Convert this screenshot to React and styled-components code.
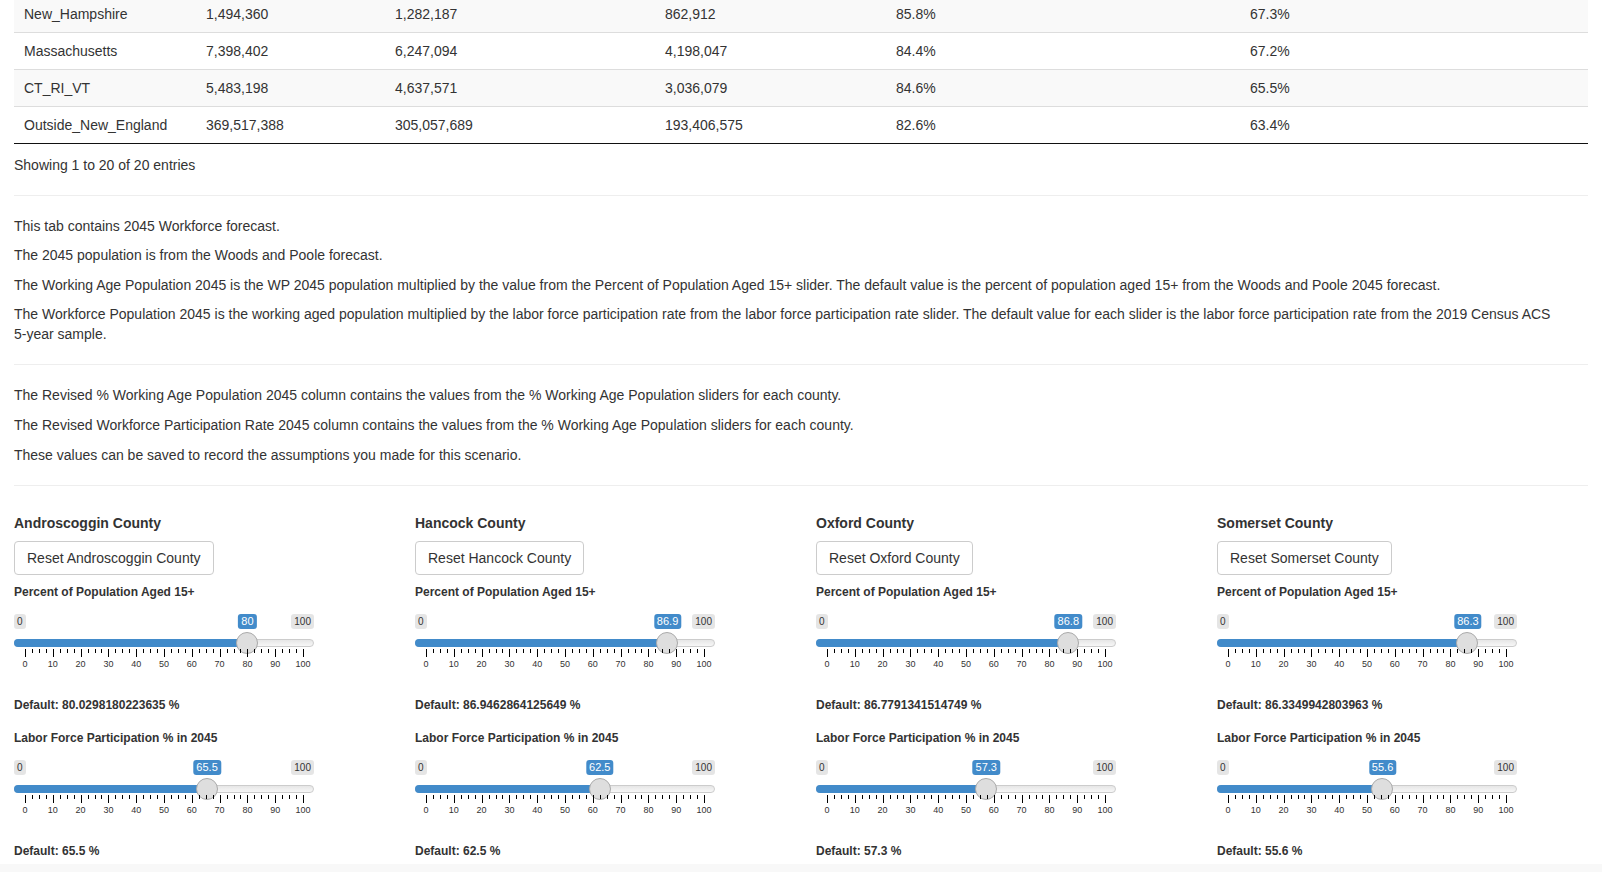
import styled, { createGlobalStyle } from "styled-components";

const GlobalStyle = createGlobalStyle`
  html, body {
    margin: 0;
    overflow: hidden;
    background: #fff;
  }
  body {
    font-family: "Liberation Sans", Arial, sans-serif;
    font-size: 14px;
    line-height: 20px;
    color: #333;
  }
`;

const Page = styled.div({
  padding: "0 14px",
});

const Table = styled.table({
  width: "100%",
  tableLayout: "fixed",
  borderCollapse: "collapse",
  marginTop: "-4px",
  borderBottom: "1px solid #111",
});

const Row = styled.tr`
  background: ${(p) => (p.$odd ? "#f9f9f9" : "#fff")};
`;

const Cell = styled.td`
  padding: 8px 10px;
  line-height: 20px;
  white-space: nowrap;
  border-top: ${(p) => (p.$first ? "none" : "1px solid #ddd")};
`;

const Info = styled.div({
  paddingTop: "10.6px",
  lineHeight: "20px",
});

const Rule = styled.hr({
  margin: "20px 0",
  border: 0,
  borderTop: "1px solid #eee",
});

const Para = styled.p({
  margin: "0 0 9.6px",
});

const NoWrap = styled.span({
  whiteSpace: "nowrap",
});

const CountyGrid = styled.div({
  display: "grid",
  gridTemplateColumns: "repeat(4, 1fr)",
  columnGap: "30px",
});

const CountyColumn = styled.div({
  display: "flex",
  flexDirection: "column",
  alignItems: "flex-start",
});

const CountyName = styled.h5({
  margin: "10px 0 0",
  fontSize: "14px",
  lineHeight: "15.4px",
  fontWeight: 700,
});

const ResetButton = styled.button({
  marginTop: "10px",
  padding: "6px 12px",
  fontFamily: "inherit",
  fontSize: "14px",
  lineHeight: "20px",
  color: "#333",
  background: "#fff",
  border: "1px solid #ccc",
  borderRadius: "4px",
});

const SliderLabel = styled.div`
  margin-top: ${(p) => p.$top}px;
  font-size: 12px;
  line-height: 17px;
  font-weight: 700;
`;

const DefaultText = styled.div({
  marginTop: "27px",
  fontSize: "12px",
  lineHeight: "17px",
  fontWeight: 700,
});

const SliderWrap = styled.div({
  width: "300px",
  marginTop: "13px",
});

const EdgeRow = styled.div({
  position: "relative",
  display: "flex",
  justifyContent: "space-between",
  height: "15px",
});

const EdgeLabel = styled.span({
  fontSize: "10px",
  lineHeight: "13px",
  padding: "1px 3px",
  background: "rgba(0,0,0,0.1)",
  borderRadius: "3px",
  color: "#333",
});

const ValueBubble = styled.span({
  position: "absolute",
  top: 0,
  transform: "translateX(-50%)",
  fontSize: "11px",
  lineHeight: "13px",
  padding: "1px 3px",
  background: "#428bca",
  color: "#fff",
  borderRadius: "3px",
});

const Track = styled.div({
  position: "relative",
  marginTop: "10px",
  height: "8px",
  boxSizing: "border-box",
  border: "1px solid #ccc",
  borderRadius: "16px",
  background: "linear-gradient(to bottom, #dedede -50%, #fff 150%)",
});

const Fill = styled.div({
  position: "absolute",
  left: "-1px",
  top: "-1px",
  bottom: "-1px",
  background: "#428bca",
  borderRadius: "8px 0 0 8px",
});

const Handle = styled.div({
  position: "absolute",
  top: "50%",
  width: "22px",
  height: "22px",
  margin: "-11px 0 0 -11px",
  boxSizing: "border-box",
  border: "1px solid #aaa",
  borderRadius: "50%",
  background: "#dedede",
});

const Grid = styled.div({
  position: "relative",
  height: "21px",
  marginTop: "2px",
});

const Tick = styled.span`
  position: absolute;
  top: 0;
  width: 1px;
  height: ${(p) => (p.$major ? "8px" : "4px")};
  background: #000;
`;

const TickText = styled.span({
  position: "absolute",
  top: "10px",
  transform: "translateX(-50%)",
  fontSize: "9px",
  lineHeight: "11px",
  color: "#333",
});

const BottomBand = styled.div({
  marginTop: "3.6px",
  height: "30px",
  background: "#f8f8f8",
});

const rows = [
  ["New_Hampshire", "1,494,360", "1,282,187", "862,912", "85.8%", "67.3%"],
  ["Massachusetts", "7,398,402", "6,247,094", "4,198,047", "84.4%", "67.2%"],
  ["CT_RI_VT", "5,483,198", "4,637,571", "3,036,079", "84.6%", "65.5%"],
  ["Outside_New_England", "369,517,388", "305,057,689", "193,406,575", "82.6%", "63.4%"],
];

const colWidths = [182, 189, 270, 231, 354, null];

const counties = [
  { name: "Androscoggin", age: 80, ageDefault: "80.0298180223635", labor: 65.5 },
  { name: "Hancock", age: 86.9, ageDefault: "86.9462864125649", labor: 62.5 },
  { name: "Oxford", age: 86.8, ageDefault: "86.7791341514749", labor: 57.3 },
  { name: "Somerset", age: 86.3, ageDefault: "86.3349942803963", labor: 55.6 },
];

// place along the usable track (handle radius is 11px each side)
const at = (v) => `calc(11px + ${v / 100} * (100% - 22px))`;

const ticks = [];
for (let i = 0; i <= 40; i++) ticks.push(i * 2.5);

function Slider({ value }) {
  return (
    <SliderWrap>
      <EdgeRow>
        <EdgeLabel>0</EdgeLabel>
        <EdgeLabel>100</EdgeLabel>
        <ValueBubble style={{ left: at(value) }}>{value}</ValueBubble>
      </EdgeRow>
      <Track>
        <Fill style={{ width: `calc(12px + ${value / 100} * (100% - 22px))` }} />
        <Handle style={{ left: at(value) }} />
      </Track>
      <Grid>
        {ticks.map((t) => (
          <Tick key={t} $major={t % 10 === 0} style={{ left: at(t) }} />
        ))}
        {ticks
          .filter((t) => t % 10 === 0)
          .map((t) => (
            <TickText key={"l" + t} style={{ left: at(t) }}>
              {t}
            </TickText>
          ))}
      </Grid>
    </SliderWrap>
  );
}

export default function App() {
  return (
    <>
      <GlobalStyle />
      <Page>
        <Table>
          <colgroup>
            {colWidths.map((w, i) => (
              <col key={i} style={w ? { width: w } : undefined} />
            ))}
          </colgroup>
          <tbody>
            {rows.map((r, i) => (
              <Row key={r[0]} $odd={i % 2 === 0}>
                {r.map((c, j) => (
                  <Cell key={j} $first={i === 0}>
                    {c}
                  </Cell>
                ))}
              </Row>
            ))}
          </tbody>
        </Table>
        <Info>Showing 1 to 20 of 20 entries</Info>
        <Rule />
        <Para>This tab contains 2045 Workforce forecast.</Para>
        <Para>The 2045 population is from the Woods and Poole forecast.</Para>
        <Para>
          The Working Age Population 2045 is the WP 2045 population multiplied by the value from the
          Percent of Population Aged 15+ slider. The default value is the percent of population aged
          15+ from the Woods and Poole 2045 forecast.
        </Para>
        <Para>
          The Workforce Population 2045 is the working aged population multiplied by the labor force
          participation rate from the labor force participation rate slider. The default value for
          each slider is the labor force participation rate from the 2019 Census ACS{" "}
          <NoWrap>5-year</NoWrap> sample.
        </Para>
        <Rule />
        <Para>
          The Revised % Working Age Population 2045 column contains the values from the % Working Age
          Population sliders for each county.
        </Para>
        <Para>
          The Revised Workforce Participation Rate 2045 column contains the values from the % Working
          Age Population sliders for each county.
        </Para>
        <Para>These values can be saved to record the assumptions you made for this scenario.</Para>
        <Rule />
        <CountyGrid>
          {counties.map((c) => (
            <CountyColumn key={c.name}>
              <CountyName>{c.name} County</CountyName>
              <ResetButton>Reset {c.name} County</ResetButton>
              <SliderLabel $top={9}>Percent of Population Aged 15+</SliderLabel>
              <Slider value={c.age} />
              <DefaultText>Default: {c.ageDefault} %</DefaultText>
              <SliderLabel $top={16}>Labor Force Participation % in 2045</SliderLabel>
              <Slider value={c.labor} />
              <DefaultText>Default: {c.labor} %</DefaultText>
            </CountyColumn>
          ))}
        </CountyGrid>
      </Page>
      <BottomBand />
    </>
  );
}
